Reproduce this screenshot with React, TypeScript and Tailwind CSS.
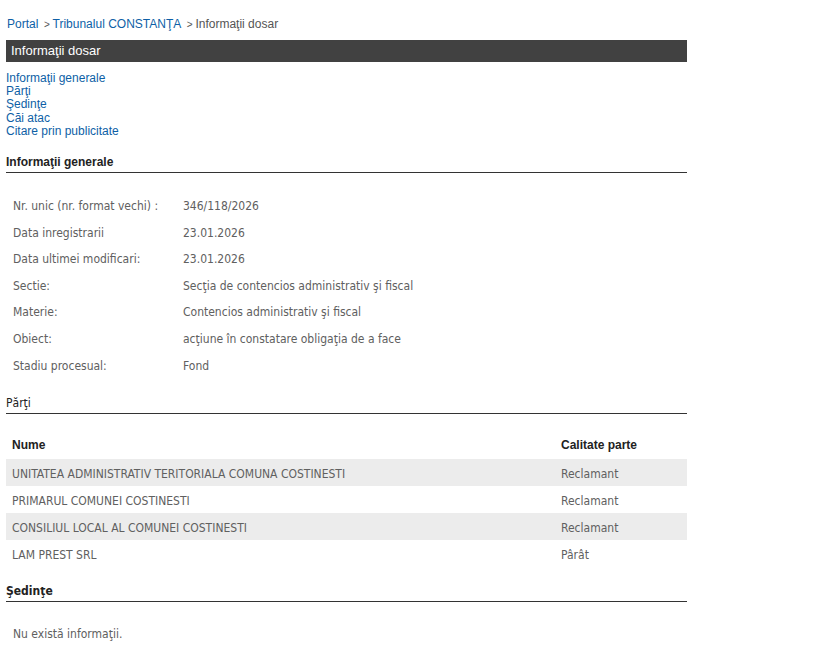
import React from "react";

const arial = "font-['Liberation_Sans',Arial,sans-serif]";
const tahoma = "font-['DejaVu_Sans_Condensed','DejaVu_Sans',sans-serif]";

const links = ["Informaţii generale", "Părţi", "Şedinţe", "Căi atac", "Citare prin publicitate"];

const info: [string, string][] = [
  ["Nr. unic (nr. format vechi) :", "346/118/2026"],
  ["Data inregistrarii", "23.01.2026"],
  ["Data ultimei modificari:", "23.01.2026"],
  ["Sectie:", "Secţia de contencios administrativ şi fiscal"],
  ["Materie:", "Contencios administrativ şi fiscal"],
  ["Obiect:", "acţiune în constatare obligaţia de a face"],
  ["Stadiu procesual:", "Fond"],
];

const parti: [string, string][] = [
  ["UNITATEA ADMINISTRATIV TERITORIALA COMUNA COSTINESTI", "Reclamant"],
  ["PRIMARUL COMUNEI COSTINESTI", "Reclamant"],
  ["CONSILIUL LOCAL AL COMUNEI COSTINESTI", "Reclamant"],
  ["LAM PREST SRL", "Pârât"],
];

const SectionTitle = ({ children, className = "" }: { children: React.ReactNode; className?: string }) => (
  <div className={`border-b-[1.5px] border-[#333] pb-[3px] text-[12px] leading-[14px] text-[#222] ${className}`}>
    {children}
  </div>
);

export default function App() {
  return (
    <div className="bg-white min-h-[672px] w-[817px]">
      <div className="ml-[6px] w-[681px] pt-[17px]">
        {/* breadcrumb */}
        <div className={`${arial} text-[12px] leading-[14px] text-[#555] pl-[1px]`}>
          <a className="text-[#0e5fa6]">Portal</a>
          <span className="text-[10px]">&nbsp; &gt; </span>
          <a className="text-[#0e5fa6]">Tribunalul CONSTANŢA</a>
          <span className="text-[10px]">&nbsp; &gt; </span>
          Informaţii dosar
        </div>

        <div className={`${arial} mt-[8px] h-[22px] bg-[#414141] pl-[5px] text-[13px] leading-[21px] text-white`}>
          Informaţii dosar
        </div>

        <div className={`${arial} mt-[9.5px] flex flex-col text-[12px] leading-[13.4px] text-[#0e5fa6]`}>
          {links.map((l) => (
            <a key={l}>{l}</a>
          ))}
        </div>

        <SectionTitle className={`${arial} mt-[16.5px] font-bold`}>Informaţii generale</SectionTitle>

        <div className={`${tahoma} mt-[19.5px] text-[12px] text-[#606060]`}>
          {info.map(([k, v]) => (
            <div key={k} className="flex h-[26.67px] items-center">
              <div className="w-[177px] pl-[7px]">{k}</div>
              <div>{v}</div>
            </div>
          ))}
        </div>

        <SectionTitle className={`${tahoma} mt-[17px]`}>Părţi</SectionTitle>

        <div className="mt-[17px]">
          <div className={`${arial} flex h-[28px] items-center text-[12px] font-bold text-[#222]`}>
            <div className="w-[555px] pl-[6px]">Nume</div>
            <div>Calitate parte</div>
          </div>
          {parti.map(([n, c], i) => (
            <div
              key={n}
              className={`${tahoma} flex h-[27px] items-center pt-[2px] text-[12px] text-[#606060] ${i % 2 === 0 ? "bg-[#ececec]" : ""}`}
            >
              <div className="w-[555px] pl-[6px]">{n}</div>
              <div>{c}</div>
            </div>
          ))}
        </div>

        <SectionTitle className={`${tahoma} mt-[17px] font-bold`}>Şedinţe</SectionTitle>

        <div className={`${tahoma} mt-[25px] pl-[7px] text-[12px] leading-[14px] text-[#606060]`}>
          Nu există informaţii.
        </div>
      </div>
    </div>
  );
}
